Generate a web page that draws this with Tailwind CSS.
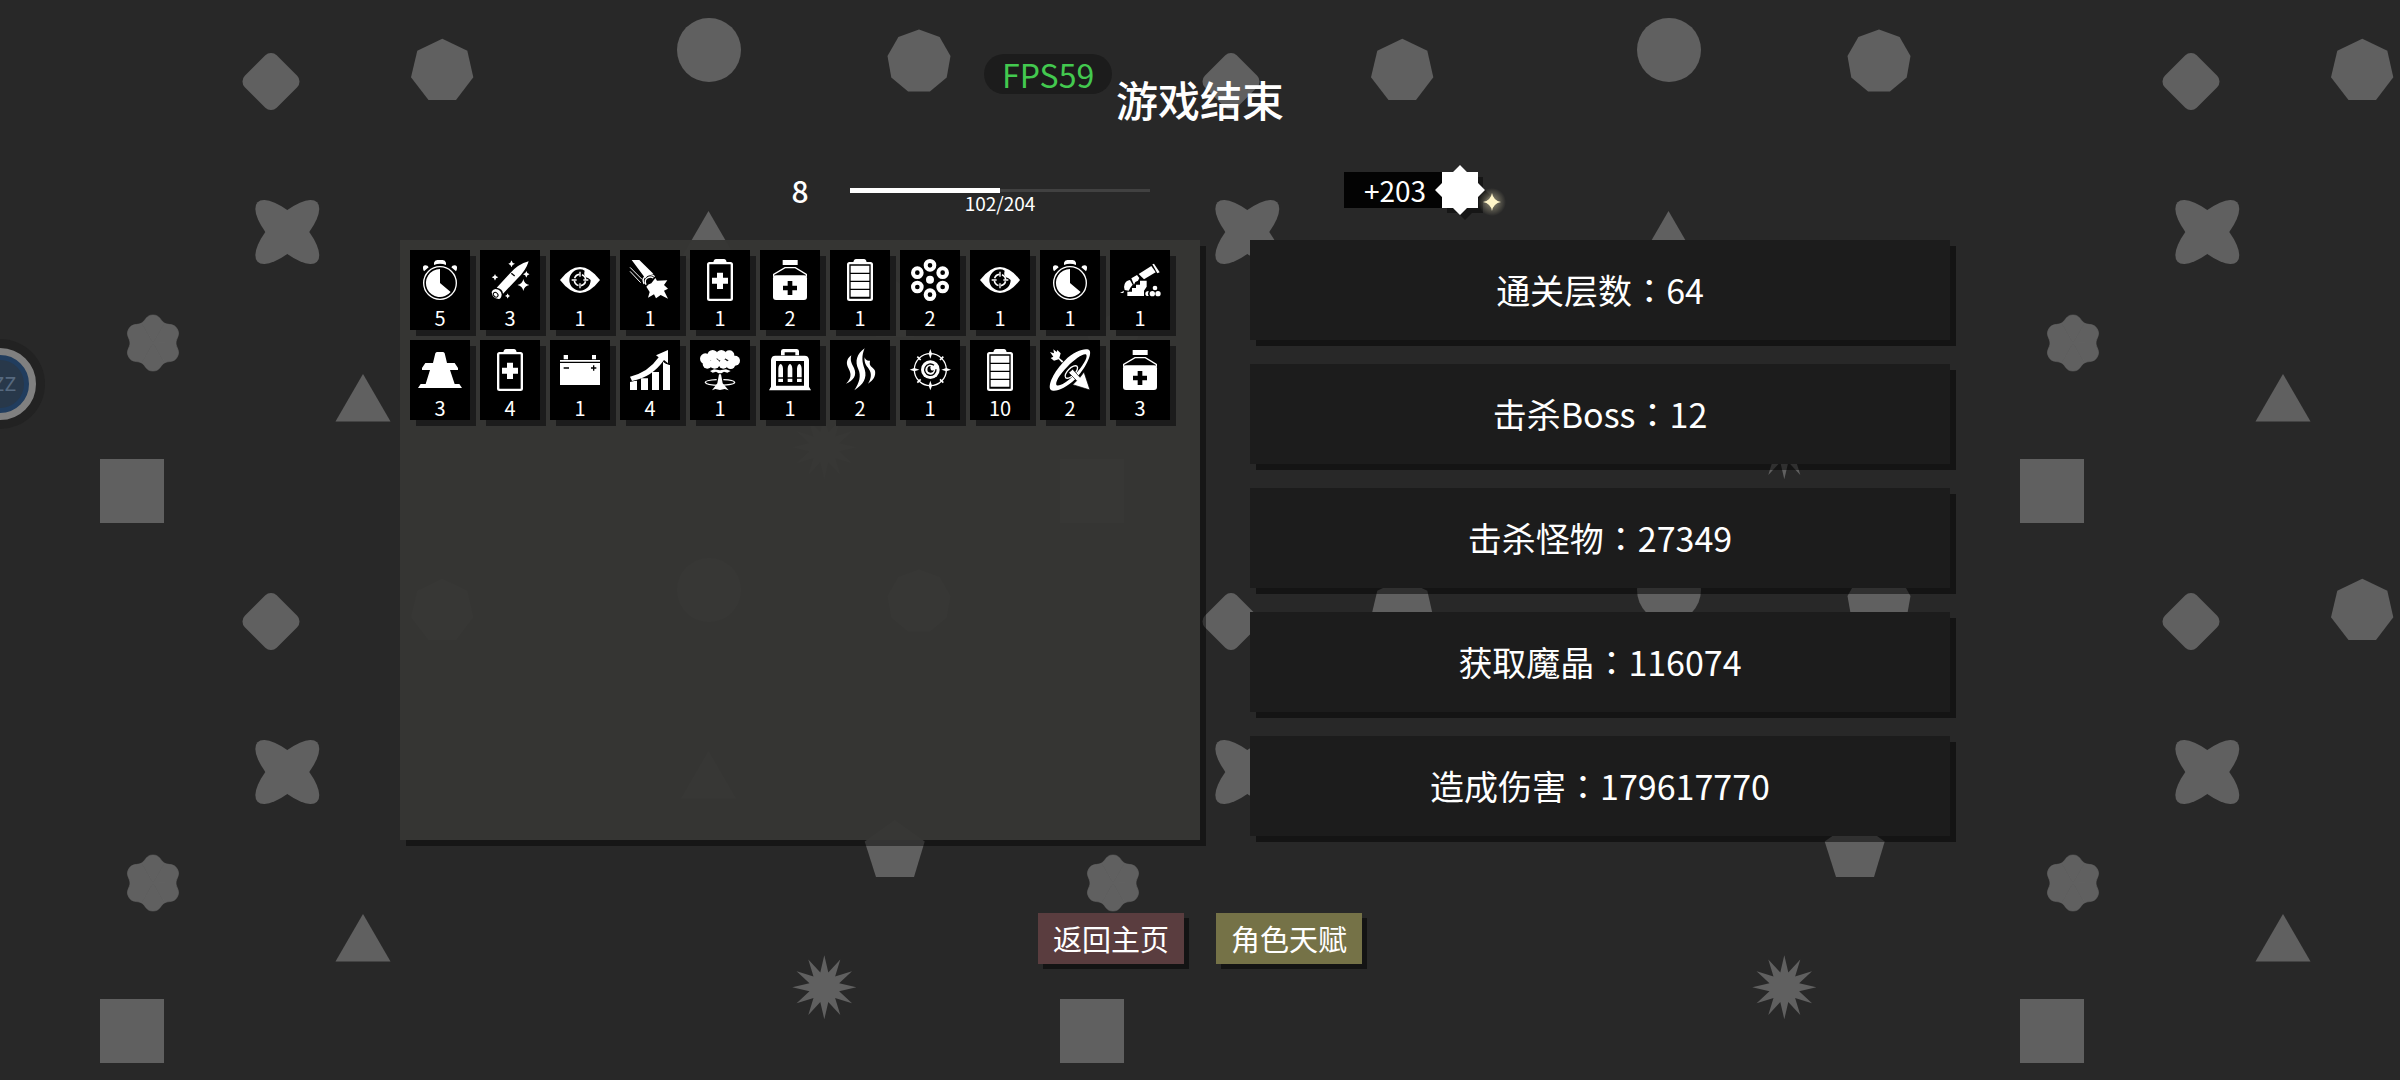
<!DOCTYPE html>
<html lang="zh-CN">
<head>
  <meta charset="UTF-8" />
  <meta name="viewport" content="width=device-width, initial-scale=1.0" />
  <title>游戏结束</title>
  <script src="https://cdn.jsdelivr.net/npm/@tailwindcss/browser@4"></script>
</head>
<body class="relative min-h-screen overflow-hidden bg-[#282828] text-white font-['Noto_Sans_CJK_SC',sans-serif]">

  <!-- Background pattern -->
  <svg class="absolute inset-0 -z-10 h-full w-full" aria-hidden="true">
    <defs>
      <path id="lobe" d="M0 0L-11.5-19.9C-7.2-22.4-7-28 0-28S7.2-22.4 11.5-19.9Z" />
      <pattern id="shapes" width="960" height="540" patternUnits="userSpaceOnUse">
        <g fill="#606060">
          <rect x="-22.5" y="-22.5" width="45" height="45" rx="8" transform="translate(271 81.5) rotate(45)" />
          <path d="M442.3 38.7L467.3 50.7L473.3 77.3L456 100H428.5L411 77.3L417.3 50.7Z" />
          <circle cx="709" cy="50" r="32" />
          <path transform="translate(919 61.5)" d="M0-32L20.6-24.5L31.5-5.6L27.7 16L10.9 30H-10.9L-27.7 16L-31.5-5.6L-20.6-24.5Z" />
          <g transform="translate(287.3 232)">
            <ellipse rx="42" ry="16.7" transform="rotate(45)" />
            <ellipse rx="42" ry="16.7" transform="rotate(-45)" />
          </g>
          <path d="M708.5 211L736 258.500H681Z" />
          <path d="M363 374L390.500 421.500H335.500Z" />
          <g transform="translate(153 343)" stroke="#606060" stroke-width=".6">
            <use href="#lobe" /><use href="#lobe" transform="rotate(60)" /><use href="#lobe" transform="rotate(120)" />
            <use href="#lobe" transform="rotate(180)" /><use href="#lobe" transform="rotate(240)" /><use href="#lobe" transform="rotate(300)" />
          </g>
          <rect x="100" y="459" width="64" height="64" />
          <path transform="translate(824.3 447.3)" d="M0-32L4-14.800L16-27.700L10.800-10.800L27.700-16L14.800-4L32 0L14.800 4L27.700 16L10.800 10.800L16 27.700L4 14.800L0 32L-4 14.800L-16 27.700L-10.800 10.800L-27.700 16L-14.800 4L-32 0L-14.800-4L-27.700-16L-10.800-10.800L-16-27.700L-4-14.800Z" />
          <path d="M894.700 280L924.700 301.500L914 337H876L864.700 301.500Z" />
        </g>
      </pattern>
    </defs>
    <rect width="100%" height="100%" fill="url(#shapes)" />
  </svg>

  <!-- Icons -->
  <svg class="hidden" aria-hidden="true">
    <symbol id="spark" viewBox="-10 -10 20 20"><path d="M0-10Q1.500-1.500 10 0Q1.500 1.500 0 10Q-1.500 1.500-10 0Q-1.500-1.500 0-10Z" /></symbol>

    <symbol id="stopwatch" viewBox="0 0 144 144">
      <circle cx="72" cy="81" r="49" fill="none" stroke="#fff" stroke-width="4" />
      <path d="M72 81V39A42 42 0 1 0 104 108Z" />
      <path d="M54 27V20Q56 12 64 12H80Q88 12 90 20V27Q72 20 54 27Z" />
      <path d="M21 37Q20 28 28 28Q36 28 38 34L24 46Q21 42 21 37ZM123 37Q124 28 116 28Q108 28 106 34L120 46Q123 42 123 37Z" />
    </symbol>

    <symbol id="bullet" viewBox="0 0 144 144">
      <path d="M32 95L70 54Q96 24 128 16Q120 44 93 69L51 113Q50 98 32 95Z" />
      <path d="M76 52L86 60" stroke="#000" stroke-width="4" />
      <path d="M28 99Q46 101 47 116Q45 129 38 129Q18 126 17 108Q19 100 28 99Z" />
      <ellipse cx="29" cy="116" rx="8" ry="6" fill="none" stroke="#000" stroke-width="3" transform="rotate(45 29 116)" />
      <use href="#spark" x="66" y="13" width="21" height="21" />
      <use href="#spark" x="17" y="54" width="20" height="20" />
      <use href="#spark" x="111" y="45" width="20" height="20" />
      <use href="#spark" x="94" y="69" width="36" height="36" />
      <use href="#spark" x="57" y="112" width="16" height="16" />
    </symbol>

    <symbol id="eye" viewBox="0 0 144 144">
      <path d="M12 72Q42 33 72 33T132 72Q102 111 72 111T12 72Z" />
      <path d="M72 40A32 32 0 1 0 104 72Q98 66 90 64Q82 58 86 44Q80 40 72 40Z" fill="#000" />
      <circle cx="72" cy="72" r="17" fill="none" stroke="#fff" stroke-width="5" stroke-dasharray="19 7.700" stroke-dashoffset="-4" />
      <path d="M72 47V62M72 82V97M47 72H62M82 72H97" stroke="#fff" stroke-width="4" />
    </symbol>

    <symbol id="blast" viewBox="0 0 144 144">
      <path d="M17 12H40L82 53Q66 54 58 67Z" />
      <path d="M12 34L48 70M12 46L44 80" stroke="#fff" stroke-width="3" />
      <path d="M54 84Q46 66 62 58Q78 52 86 62M60 86Q54 72 64 66Q74 60 82 66" fill="none" stroke="#fff" stroke-width="4" />
      <path d="M61 92Q66 84 76 82L88 66L93 74L124 73L114 87L126 98L114 104L126 128L104 117L90 127L84 115L66 125L71 108Z" />
    </symbol>

    <symbol id="battery-plus" viewBox="0 0 144 144">
      <rect x="36.500" y="21.500" width="71" height="110" rx="4" fill="none" stroke="#fff" stroke-width="7" />
      <path d="M52 19Q54 9 60 9H84Q90 9 92 19Z" />
      <path d="M63 50H81V65H96V83H81V99H63V83H48V65H63Z" />
    </symbol>

    <symbol id="battery" viewBox="0 0 144 144">
      <rect x="36.500" y="21.500" width="71" height="110" rx="4" fill="none" stroke="#fff" stroke-width="7" />
      <path d="M52 19Q54 9 60 9H84Q90 9 92 19Z" />
      <path d="M44 29H100V50H44ZM44 54H100V74H44ZM44 78H100V98H44ZM44 102H100V122H44Z" />
    </symbol>

    <symbol id="bottle" viewBox="0 0 144 144">
      <path d="M50 12H95V27H50Z" />
      <path d="M23 62V55L57 35H88L121 55V62" fill="none" stroke="#fff" stroke-width="4" />
      <rect x="21" y="58" width="102" height="74" rx="9" />
      <path d="M65 75H79V89H93V103H79V117H65V103H51V89H65Z" fill="#000" />
    </symbol>

    <symbol id="cylinder" viewBox="0 0 144 144">
      <circle cx="72" cy="71" r="12" />
      <g fill="none" stroke="#fff" stroke-width="12">
        <circle cx="72" cy="28" r="13" /><circle cx="110" cy="50" r="13" /><circle cx="110" cy="93" r="13" />
        <circle cx="72" cy="116" r="13" /><circle cx="34" cy="93" r="13" /><circle cx="34" cy="50" r="13" />
      </g>
    </symbol>

    <symbol id="cannon" viewBox="0 0 144 144">
      <path d="M109 25L114 23L131 49L124 52Z" />
      <path d="M68 54L106 30L119 49L84 70Z" />
      <path d="M46 67L63 57L70 66L66 74L58 78L54 86Z" />
      <path d="M26 84Q30 74 42 72L50 86L44 94L38 104L26 102Q22 94 26 84Z" />
      <path d="M12 111L24 104L22 111Z" />
      <path d="M34 120V107H48V96H60V86H72V74H92V92L84 104V120Z" />
      <circle cx="109" cy="113" r="8" /><circle cx="126" cy="113" r="8" /><circle cx="117" cy="96" r="7" />
      <path d="M98 105Q88 105 88 113T98 120Q94 113 98 105Z" />
    </symbol>

    <symbol id="pylon" viewBox="0 0 144 144">
      <path d="M64 18H80Q84 18 86 22L93 51H116L126 66V72H102L116 114H130L138 126H6L14 114H29L42 72H18V66L28 51H51L58 22Q60 18 64 18Z" />
    </symbol>

    <symbol id="car-battery" viewBox="0 0 144 144">
      <path d="M23 27H36V40H23ZM108 27H120V40H108ZM12 42H132V47H12ZM12 51H132V117H12Z" />
      <path d="M23 66H39M105 66H121M113 58V74" stroke="#000" stroke-width="4" />
    </symbol>

    <symbol id="chart" viewBox="0 0 144 144">
      <path d="M12 132V104H33V132ZM45 132V97H66V132ZM78 132V78H99V132ZM111 132V42H132V132Z" />
      <path d="M10 97Q70 84 104 30" fill="none" stroke="#000" stroke-width="23" />
      <path d="M127 8L132 56L120 52L84 28Z" fill="#000" stroke="#000" stroke-width="3" />
      <path d="M12 92Q66 80 98 34L90 28L126 12V52L114 42Q78 94 18 105Z" />
    </symbol>

    <symbol id="mushroom" viewBox="0 0 144 144">
      <circle cx="28" cy="38" r="16" /><circle cx="50" cy="28" r="16" /><circle cx="76" cy="28" r="16" /><circle cx="100" cy="28" r="15" />
      <circle cx="117" cy="44" r="15" /><circle cx="34" cy="54" r="14" /><circle cx="104" cy="55" r="14" /><circle cx="56" cy="53" r="15" /><circle cx="82" cy="54" r="14" />
      <path d="M42 75L54 70L72 73L90 70L104 75L94 80L84 77L76 82L68 82L60 77L50 80Z" />
      <path d="M69 85H75L80 112L98 133L86 129L72 132L58 129L48 133L64 112Z" />
      <path d="M62 101Q28 103 28 109Q30 117 72 118Q116 117 116 109Q114 102 82 101" fill="none" stroke="#fff" stroke-width="4" />
    </symbol>

    <symbol id="ammo" viewBox="0 0 144 144">
      <path d="M45 28V15Q46 9 52 9H92Q98 9 99 15V28H88V19H56V28Z" />
      <path fill-rule="evenodd" d="M15 122V42Q16 29 28 29H116Q128 29 129 42V122L135 133H9ZM30 45V119H114V45Z" />
      <path d="M37 94V68Q38 56 44 54Q50 56 51 68V94ZM65 94V68Q66 56 72 54Q78 56 79 68V94ZM93 94V68Q94 56 100 54Q106 56 107 68V94Z" />
      <path d="M37 98H51V108H37ZM65 98H79V108H65ZM93 98H107V108H93Z" />
    </symbol>

    <symbol id="steam" viewBox="0 0 144 144">
      <path d="M86 7C62 24 56 46 67 70C76 90 70 110 55 133C82 116 94 96 86 70C78 48 76 30 86 7Z" />
      <path d="M46 28C30 40 30 54 38 68C48 86 44 98 30 113C52 104 64 88 54 66C46 50 42 44 46 28Z" />
      <path d="M86 34C84 50 90 58 98 68C108 82 106 96 96 113C112 102 120 90 117 74C110 60 98 64 102 44C94 46 88 42 86 34Z" />
    </symbol>

    <symbol id="target" viewBox="0 0 144 144">
      <circle cx="73" cy="71" r="48" fill="none" stroke="#fff" stroke-width="4" />
      <path id="tick" d="M73 9L78 23L73 38L68 23Z" />
      <use href="#tick" transform="rotate(90 73 71)" /><use href="#tick" transform="rotate(180 73 71)" /><use href="#tick" transform="rotate(270 73 71)" />
      <g stroke="#fff" stroke-width="5"><path d="M34 32L44 42M112 32L102 42M34 110L44 100M112 110L102 100" /></g>
      <circle cx="73" cy="71" r="28" />
      <path d="M84 58A17 17 0 1 0 90 70" fill="none" stroke="#000" stroke-width="4" />
      <path d="M74 60A10 10 0 1 0 84 72Q76 76 74 70T74 60Z" fill="#000" />
    </symbol>

    <symbol id="bow" viewBox="0 0 144 144">
      <path fill-rule="evenodd" d="M14 131C4 118 24 76 56 44C88 12 124 4 131 14C138 26 118 68 88 99C58 129 24 140 14 131ZM32 118C40 122 62 110 84 88C110 62 126 34 121 26C114 20 88 38 64 62C40 86 26 110 32 118Z" />
      <ellipse cx="76" cy="78" rx="24" ry="11" fill="none" stroke="#fff" stroke-width="4" transform="rotate(-45 76 78)" />
      <path d="M132 132L80 116L92 104L68 80L80 70L102 94L114 78Z" stroke="#000" stroke-width="2" />
      <path d="M12 18L24 22L22 10L32 18L34 12L44 22L40 36L52 46L48 50L38 40L24 44L14 36L22 32Z" />
    </symbol>
  </svg>

  <!-- Overlays -->
  <div class="absolute left-1/2 top-[54px] flex h-10 -translate-x-[216px] items-center rounded-full bg-[#1c1c1c] px-[18px] text-[32px] text-[#43c94f]">FPS59</div>
  <button type="button" class="absolute -left-[45px] top-[339px] grid size-[90px] place-items-center rounded-full bg-[#222222]">
    <span class="grid size-[72px] place-items-center rounded-full border-[7px] border-[#808080] bg-[#213d5e]">
      <span class="grid size-12 place-items-center rounded-full bg-[#28384a] font-['DejaVu_Sans_Mono',monospace] text-[20px] text-[#56697f]"><span class="pl-2">ZZ</span></span>
    </span>
  </button>

  <main class="mx-auto flex w-full max-w-[1600px] flex-col pt-[69px]">
    <h1 class="text-center text-[42px] font-medium leading-[60px]">游戏结束</h1>

    <!-- Level and reward -->
    <div class="mt-[43px] grid grid-cols-2 items-start">
      <div class="flex justify-end pr-[50px]">
        <span class="w-[100px] text-center text-[30px] font-medium leading-9">8</span>
        <div class="w-[300px] pt-4">
          <div class="flex h-[5px] items-center bg-[linear-gradient(#414141,#414141)] bg-[length:100%_3px] bg-center bg-no-repeat">
            <div class="h-[5px] bg-white" style="width: 50%"></div>
          </div>
          <p class="text-center text-[19px] leading-5">102/204</p>
        </div>
      </div>
      <div class="flex items-center pl-[144px]">
        <span class="h-9 bg-[#030303] pl-5 pr-4 text-[28px] leading-9">+203</span>
        <svg class="-my-3 -ml-2 h-[60px] w-[80px]" viewBox="0 0 80 60" fill="#fff" aria-hidden="true">
          <defs>
            <radialGradient id="glow"><stop offset="0" stop-color="#fff5c8" stop-opacity=".5" /><stop offset="1" stop-color="#fff5c8" stop-opacity="0" /></radialGradient>
            <path id="star" d="M26 5L33 12H44V23L51 30L44 37V48H33L26 55L19 48H8V37L1 30L8 23V12H19Z" />
          </defs>
          <use href="#star" x="5" y="5" fill="#161616" />
          <use href="#star" />
          <circle cx="58" cy="42" r="14" fill="url(#glow)" />
          <use href="#spark" x="49" y="33" width="18" height="18" fill="#fff5c8" />
        </svg>
      </div>
    </div>

    <!-- Items and stats -->
    <div class="mt-[27px] grid grid-cols-2">
      <ul id="items" class="flex min-h-[600px] flex-wrap content-start gap-[10px] bg-[#363634]/97 p-[10px] shadow-[6px_6px_0_rgba(0,0,0,0.45)]"></ul>
      <ul class="flex flex-col gap-6 px-[50px] text-center text-[34px] leading-[100px] [&>li]:bg-[#1c1c1c] [&>li]:shadow-[6px_6px_0_rgba(0,0,0,0.5)]">
        <li>通关层数<span class="font-['Noto_Sans_CJK_JP',sans-serif]" lang="ja">：</span>64</li>
        <li>击杀Boss<span class="font-['Noto_Sans_CJK_JP',sans-serif]" lang="ja">：</span>12</li>
        <li>击杀怪物<span class="font-['Noto_Sans_CJK_JP',sans-serif]" lang="ja">：</span>27349</li>
        <li>获取魔晶<span class="font-['Noto_Sans_CJK_JP',sans-serif]" lang="ja">：</span>116074</li>
        <li>造成伤害<span class="font-['Noto_Sans_CJK_JP',sans-serif]" lang="ja">：</span>179617770</li>
      </ul>
    </div>

    <!-- Actions -->
    <div class="mt-[73px] flex justify-center gap-8 text-[29px] leading-[51px]">
      <button type="button" class="bg-[#5a3d3f] px-[15px] shadow-[5px_5px_0_#141414]">返回主页</button>
      <button type="button" class="bg-[#757247] px-[15px] shadow-[5px_5px_0_#141414]">角色天赋</button>
    </div>
  </main>

  <script>
    const items = [
      ['stopwatch', 5], ['bullet', 3], ['eye', 1], ['blast', 1], ['battery-plus', 1], ['bottle', 2],
      ['battery', 1], ['cylinder', 2], ['eye', 1], ['stopwatch', 1], ['cannon', 1],
      ['pylon', 3], ['battery-plus', 4], ['car-battery', 1], ['chart', 4], ['mushroom', 1], ['ammo', 1],
      ['steam', 2], ['target', 1], ['battery', 10], ['bow', 2], ['bottle', 3]
    ];

    document.getElementById('items').innerHTML = items.map(([icon, count]) => `
      <li class="flex h-20 w-[60px] flex-col items-center bg-black pt-[6px] shadow-[6px_6px_0_#1c1c1c]">
        <svg class="size-12 shrink-0 fill-white" aria-hidden="true"><use href="#${icon}" /></svg>
        <span class="text-[20px] leading-7">${count}</span>
      </li>`).join('');
  </script>
</body>
</html>
